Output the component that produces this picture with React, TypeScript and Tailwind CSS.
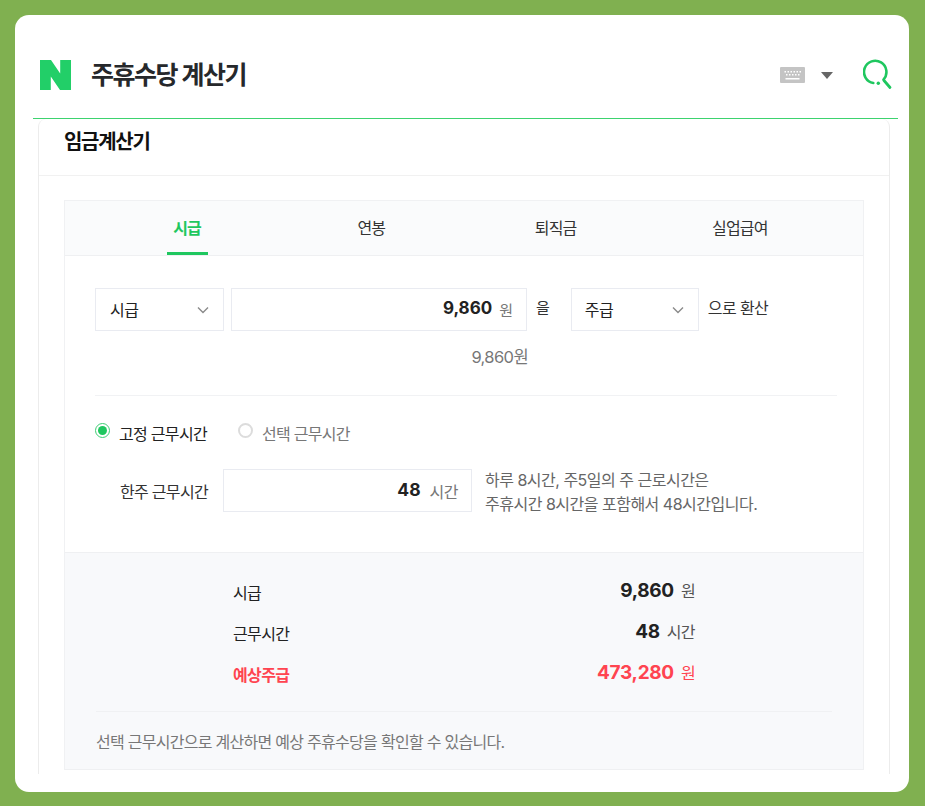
const FONT = "font-['Inter','Noto_Sans_CJK_KR',sans-serif]"

const TABS = ['시급', '연봉', '퇴직금', '실업급여']

function NaverLogo() {
  return (
    <svg className="w-[31px] h-[30px] shrink-0" viewBox="0 0 31 30" aria-hidden="true">
      <path d="M0 0h11l9.2 13.4V0H31v30H20l-9.2-13.4V30H0z" fill="#22cf68" />
    </svg>
  )
}

function KeyboardIcon() {
  return (
    <svg className="w-[25px] h-[16px]" viewBox="0 0 25 16" aria-hidden="true">
      <rect width="25" height="16" rx="1" fill="#c4c4c4" />
      {[4.5, 7.5, 10.5, 13.5, 16.5, 19.5].map(x => (
        <rect key={x} x={x} y="4" width="1.5" height="1.5" fill="#fff" />
      ))}
      {[6, 9, 12, 15, 18].map(x => (
        <rect key={x} x={x} y="7" width="1.5" height="1.5" fill="#fff" />
      ))}
      <rect x="5.5" y="11" width="14" height="1.5" fill="#fff" />
    </svg>
  )
}

function SearchIcon() {
  return (
    <svg className="w-[29px] h-[31px]" viewBox="0 0 29 31" fill="none" aria-hidden="true">
      <path d="M10.3 24A11.2 11.2 0 1 1 20.5 20.5" stroke="#1fc75f" strokeWidth="2.6" strokeLinecap="round" />
      <circle cx="15.3" cy="24.3" r="1.7" fill="#1fc75f" />
      <path d="M21 21.5l6 7" stroke="#1fc75f" strokeWidth="2.8" strokeLinecap="round" />
    </svg>
  )
}

function Chevron() {
  return (
    <svg className="w-[12px] h-[8px]" viewBox="0 0 12 8" fill="none" aria-hidden="true">
      <path d="M1 1.5l5 5 5-5" stroke="#8a8a8a" strokeWidth="1.4" />
    </svg>
  )
}

function SelectBox({ label, className }: { label: string; className: string }) {
  return (
    <div className={`h-[43px] border border-[#e9ebf1] flex items-center justify-between pr-[14px] text-[16px] tracking-[-0.5px] text-[#222] ${className}`}>
      <span>{label}</span>
      <Chevron />
    </div>
  )
}

function ResultRow({ label, value, unit, danger }: { label: string; value: string; unit: string; danger?: boolean }) {
  return (
    <div className={`flex items-center justify-between h-[41px] ${danger ? 'text-[#ff4450]' : 'text-[#222]'}`}>
      <span className={`text-[16px] tracking-[-0.6px] mt-[4px] ${danger ? 'font-bold' : ''}`}>{label}</span>
      <span className="flex items-center gap-[7px]">
        <strong className="text-[19px] font-bold leading-none tracking-[-0.3px]">{value}</strong>
        <span className={`text-[16px] tracking-[-0.6px] ${danger ? '' : 'text-[#555]'}`}>{unit}</span>
      </span>
    </div>
  )
}

export default function App() {
  return (
    <div className={`h-[806px] bg-[#80b050] pl-[15px] pr-[16px] pt-[15px] pb-[14px] overflow-hidden ${FONT}`}>
      <div className="h-full bg-white rounded-[14px] overflow-hidden px-[18px]">

        {/* header */}
        <header className="h-[104px] -mr-[7px] border-b border-[#3dd36f] flex items-center pl-[7px] pr-[6px] pt-[17px]">
          <NaverLogo />
          <h1 className="ml-[20px] mt-[1px] text-[25px] font-bold tracking-[-1.5px] text-[#26282b]">주휴수당 계산기</h1>
          <div className="ml-auto flex items-center">
            <KeyboardIcon />
            <span className="ml-[16px] w-0 h-0 border-x-[6px] border-x-transparent border-t-[7px] border-t-[#666]" />
            <span className="ml-[30px] mt-[-1px]"><SearchIcon /></span>
          </div>
        </header>

        {/* panel */}
        <section className="ml-[5px] mr-[1px] h-[655px] border-x border-[#ececec] rounded-t-[8px] overflow-hidden">
          <h2 className="h-[57px] border-b border-[#f1f1f1] pl-[25px] pb-[10px] flex items-center text-[20px] font-bold tracking-[-1.3px] text-[#111]">임금계산기</h2>

          <div className="mt-[24px] mx-[25px] border-x border-t border-[#f0f1f3]">
            {/* tabs */}
            <nav className="h-[55px] bg-[#fafbfc] border-b border-[#eff0f2] grid grid-cols-4 pl-[30px] pr-[31px] text-[16px] tracking-[-0.8px] text-[#333]">
              {TABS.map((tab, i) => (
                <div key={tab} className="flex justify-center">
                  <span className={`h-full flex items-center px-[6.5px] ${i === 0 ? 'font-bold text-[#1fc75f] border-b-[3px] border-[#1fc75f] pt-[3px]' : ''}`}>{tab}</span>
                </div>
              ))}
            </nav>

            {/* converter */}
            <div className="px-[30px] pt-[32px] h-[296px] text-[#333]">
              <div className="flex items-center">
                <SelectBox label="시급" className="w-[129px] pl-[14px]" />
                <div className="ml-[7px] w-[296px] h-[43px] border border-[#e9ebf1] flex items-center justify-end pr-[13px]">
                  <strong className="text-[17px] font-bold text-[#222] -mt-[1px]">9,860</strong>
                  <span className="ml-[7px] text-[15px] text-[#777] mt-[3px]">원</span>
                </div>
                <span className="ml-[9px] text-[15px] -mt-[3px]">을</span>
                <SelectBox label="주급" className="ml-[21px] w-[128px] pl-[13px]" />
                <span className="ml-[9px] text-[16px] tracking-[-0.6px] -mt-[3px]">으로 환산</span>
              </div>
              <p className="mt-[14px] w-[433px] text-right text-[16.5px] tracking-[-0.6px] text-[#777]">9,860원</p>

              <div className="mt-[25px] w-[742px] border-t border-[#f1f2f4]" />

              <div className="mt-[26px] flex items-center text-[16px] tracking-[-0.7px]">
                <span className="w-[15px] h-[15px] rounded-full border border-[#3fce74] flex items-center justify-center -mt-[7px]">
                  <span className="w-[9px] h-[9px] rounded-full bg-[#1fc75f]" />
                </span>
                <span className="ml-[9px] text-[#222]">고정 근무시간</span>
                <span className="ml-[31px] w-[15px] h-[15px] rounded-full border-2 border-[#dcdcdc] -mt-[7px]" />
                <span className="ml-[9px] text-[#777]">선택 근무시간</span>
              </div>

              <div className="mt-[23px] flex items-start">
                <span className="ml-[25px] w-[103px] self-center text-[16px] tracking-[-0.7px] text-[#333]">한주 근무시간</span>
                <div className="w-[249px] h-[43px] border border-[#e9ebf1] flex items-center justify-end pr-[13px]">
                  <strong className="text-[17.5px] font-bold text-[#222] -mt-[1px]">48</strong>
                  <span className="ml-[9px] text-[16px] tracking-[-0.5px] text-[#777] mt-[3px]">시간</span>
                </div>
                <p className="ml-[13px] text-[16px] leading-[24px] tracking-[-0.5px] text-[#666] -mt-[1px]">
                  하루 8시간, 주5일의 주 근로시간은<br />주휴시간 8시간을 포함해서 48시간입니다.
                </p>
              </div>
            </div>

            {/* result */}
            <div className="h-[218px] bg-[#f8f9fb] border-y border-[#eff0f2] px-[31px]">
              <div className="h-[158px] ml-[137px] mr-[137px] pt-[17px]">
                <ResultRow label="시급" value="9,860" unit="원" />
                <ResultRow label="근무시간" value="48" unit="시간" />
                <ResultRow label="예상주급" value="473,280" unit="원" danger />
              </div>
              <p className="border-t border-[#f0f1f3] pt-[18px] text-[16px] tracking-[-0.72px] text-[#777]">
                선택 근무시간으로 계산하면 예상 주휴수당을 확인할 수 있습니다.
              </p>
            </div>
          </div>
        </section>
      </div>
    </div>
  )
}
